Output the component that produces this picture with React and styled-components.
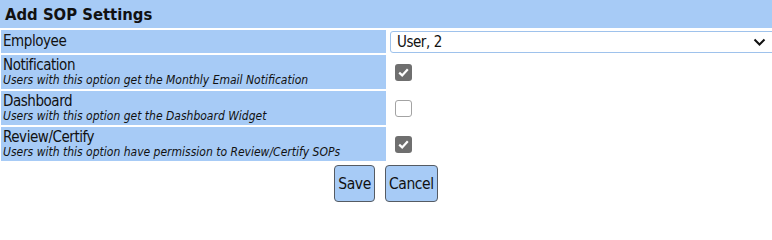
import React from 'react'
import styled, { createGlobalStyle } from 'styled-components'

const GlobalStyle = createGlobalStyle`
    body{
        margin: 0;
        background: #ffffff;
        font-family: "DejaVu Sans", Verdana, sans-serif;
        font-stretch: condensed;
        color: #111111;
    }
`

const Panel = styled.div`
    width: 772px;
    overflow: hidden;
`

const TitleBar = styled.div`
    height: 28px;
    background-color: #a7cbf6;
    padding-left: 5px;
    display: flex;
    align-items: center;
    font-size: 16.5px;
    font-weight: bold;
    color: #111;
`

const FormGrid = styled.div`
    display: grid;
    grid-template-columns: 385px 384px;
    gap: 2px;
    margin-top: 2px;
    padding-left: 1px;
`

const LabelCell = styled.div`
    background-color: #a7cbf6;
    padding: ${p => p.$tall ? '2px' : '0'} 2px 0;
    height: ${p => p.$tall ? '34px' : '23px'};
    box-sizing: border-box;
    display: flex;
    flex-direction: column;
    justify-content: ${p => p.$tall ? 'flex-start' : 'center'};
`

const Label = styled.span`
    font-size: 15px;
    letter-spacing: -0.45px;
    line-height: 17px;
`

const Note = styled.span`
    font-size: 12px;
    line-height: 13px;
    font-style: italic;
`

const ValueCell = styled.div`
    background-color: #ffffff;
    display: flex;
    align-items: center;
    padding-left: ${p => p.$pad || 7}px;
`

const Select = styled.div`
    box-sizing: border-box;
    width: 392px;
    flex-shrink: 0;
    height: 22px;
    border: 1px solid #9ec2ec;
    border-radius: 3px;
    background: #fff;
    display: flex;
    align-items: center;
    justify-content: space-between;
    padding: 0 15px 0 6px;
    font-size: 15px;
    letter-spacing: -0.45px;
`

const Check = styled.span`
    box-sizing: border-box;
    width: 17px;
    height: 17px;
    border-radius: 3px;
    display: inline-flex;
    align-items: center;
    justify-content: center;
    background: ${p => p.$on ? '#6f6f6f' : '#ffffff'};
    border: ${p => p.$on ? 'none' : '1.5px solid #a3a3a3'};
`

const Actions = styled.div`
    display: flex;
    justify-content: center;
    gap: 10px;
    margin-top: 4px;
`

const Button = styled.button`
    height: 37px;
    padding: 0 3px;
    background-color: #a7cbf6;
    border: 1.5px solid #555b63;
    border-radius: 4px;
    font-family: inherit;
    font-stretch: condensed;
    font-size: 15.5px;
    letter-spacing: -0.4px;
    color: #111;
`

const Chevron = () => (
    <svg width="13" height="8" viewBox="0 0 13 8">
        <path d="M1.5 1.5 L6.5 6.5 L11.5 1.5" fill="none" stroke="#111" strokeWidth="2" />
    </svg>
)

const Tick = () => (
    <svg width="11" height="9" viewBox="0 0 11 9">
        <path d="M1.2 4.6 L4.2 7.4 L9.8 1.2" fill="none" stroke="#fff" strokeWidth="2.2" />
    </svg>
)

const options = [
    { label: 'Notification', note: 'Users with this option get the Monthly Email Notification', on: true },
    { label: 'Dashboard', note: 'Users with this option get the Dashboard Widget', on: false },
    { label: 'Review/Certify', note: 'Users with this option have permission to Review/Certify SOPs', on: true },
]

const App = () => {
    return (
        <Panel>
            <GlobalStyle />
            <TitleBar>Add SOP Settings</TitleBar>
            <FormGrid>
                <LabelCell><Label>Employee</Label></LabelCell>
                <ValueCell $pad={2}>
                    <Select>
                        <span>User, 2</span>
                        <Chevron />
                    </Select>
                </ValueCell>
                {options.map(o => (
                    <React.Fragment key={o.label}>
                        <LabelCell $tall>
                            <Label>{o.label}</Label>
                            <Note>{o.note}</Note>
                        </LabelCell>
                        <ValueCell>
                            <Check $on={o.on}>{o.on && <Tick />}</Check>
                        </ValueCell>
                    </React.Fragment>
                ))}
            </FormGrid>
            <Actions>
                <Button>Save</Button>
                <Button>Cancel</Button>
            </Actions>
        </Panel>
    )
}

export default App
